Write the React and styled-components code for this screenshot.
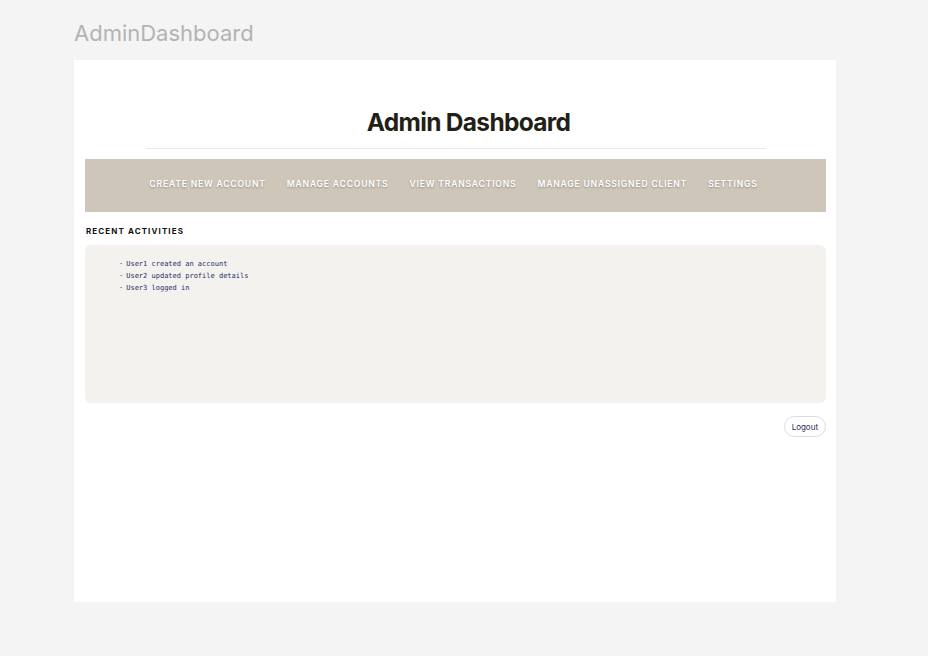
import React from "react";
import styled, { createGlobalStyle } from "styled-components";

const GlobalStyle = createGlobalStyle`
  body {
    margin: 0;
    background: #f4f4f4;
    font-family: Inter, "Noto Sans", sans-serif;
  }
`;

const navLinks = [
  "Create New Account",
  "Manage Accounts",
  "View Transactions",
  "Manage Unassigned Client",
  "Settings",
];

const activities = [
  "User1 created an account",
  "User2 updated profile details",
  "User3 logged in",
];

function App() {
  return (
    <>
      <GlobalStyle />
      <Page>
        <PageTitle>AdminDashboard</PageTitle>
        <Card>
          <Header>
            <Heading>Admin Dashboard</Heading>
            <Divider />
          </Header>
          <Nav>
            {navLinks.map((text) => (
              <NavLink key={text}>{text}</NavLink>
            ))}
          </Nav>
          <SectionTitle>Recent Activities</SectionTitle>
          <ActivityBox>
            <ActivityList>
              {activities.map((item) => (
                <li key={item}>{item}</li>
              ))}
            </ActivityList>
          </ActivityBox>
          <Footer>
            <LogoutButton>Logout</LogoutButton>
          </Footer>
        </Card>
      </Page>
    </>
  );
}

const Page = styled.div`
  padding: 19px 92px 54px 74px;
`;

const PageTitle = styled.h1`
  margin: 0 0 13px 0;
  font-size: 22px;
  font-weight: 400;
  line-height: 28px;
  color: #b3b3b3;
`;

const Card = styled.div`
  background: #fff;
  height: 542px;
  box-sizing: border-box;
  padding: 0 10px 0 11px;
  display: flex;
  flex-direction: column;
`;

const Header = styled.div`
  display: flex;
  flex-direction: column;
  align-items: center;
  padding-top: 46px;
`;

const Heading = styled.h2`
  margin: 0 0 0 26px;
  font-size: 24.5px;
  font-weight: 700;
  letter-spacing: -0.7px;
  line-height: 32px;
  color: #231f16;
`;

const Divider = styled.hr`
  width: 620px;
  border: none;
  border-top: 1px solid #e8e8e8;
  margin: 10px 0 10px;
`;

const Nav = styled.nav`
  height: 53px;
  box-sizing: border-box;
  background: #cfc6ba;
  display: flex;
  align-items: center;
  justify-content: center;
  gap: 21px;
  padding: 0 4px 4px 0;
`;

const NavLink = styled.a`
  color: #fff;
  font-size: 8.6px;
  font-weight: 600;
  letter-spacing: 0.8px;
  text-transform: uppercase;
  text-shadow: 0 1px 2px rgba(0, 0, 0, 0.3);
  cursor: pointer;
`;

const SectionTitle = styled.h3`
  margin: 14px 0 9px 1px;
  font-size: 8px;
  font-weight: 700;
  letter-spacing: 1.1px;
  line-height: 10px;
  text-transform: uppercase;
  color: #111;
`;

const ActivityBox = styled.div`
  background: #f3f2ee;
  border-radius: 6px;
  height: 158px;
  padding: 13px 0 0 34px;
  box-sizing: border-box;
`;

const ActivityList = styled.ul`
  margin: 0;
  padding: 0;
  list-style: none;
  font-family: "DejaVu Sans Mono", "Liberation Mono", monospace;
  font-size: 7px;
  line-height: 12px;
  color: #2a2a66;

  li::before {
    content: "·";
    margin-right: 3px;
  }
`;

const Footer = styled.div`
  display: flex;
  justify-content: flex-end;
  margin-top: 13px;
`;

const LogoutButton = styled.button`
  background: #fff;
  border: 1px solid #dcdcdc;
  border-radius: 11px;
  height: 21px;
  padding: 0 7px;
  font-family: Inter, "Noto Sans", sans-serif;
  font-size: 8px;
  color: #2a2a5a;
  cursor: pointer;
`;

export default App;
